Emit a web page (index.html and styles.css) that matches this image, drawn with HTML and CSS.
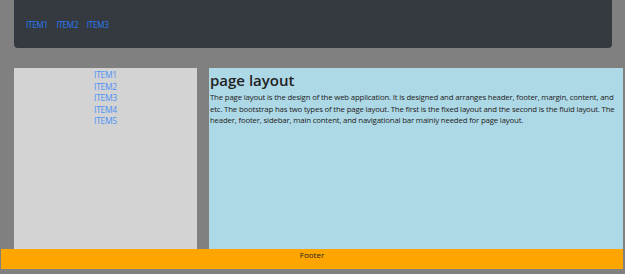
FILE: index.html
```html
<!DOCTYPE html>
<html>

<head>
    <link rel="stylesheet" href="styles.css">
</head>

<body>
    <div class="page">
        <nav class="navbar">
            <a href="#" class="nav-link">ITEM1</a>
            <a href="#" class="nav-link">ITEM2</a>
            <a href="#" class="nav-link">ITEM3</a>
        </nav>

        <div class="main">
            <div class="sidebar">
                <a href="#">ITEM1</a>
                <a href="#">ITEM2</a>
                <a href="#">ITEM3</a>
                <a href="#">ITEM4</a>
                <a href="#">ITEM5</a>
            </div>

            <div class="content">
                <h2>page layout</h2>
                <p>The page layout is the design of the web application. It is designed and arranges header, footer, margin, content, and etc. The bootstrap has two types of the page layout. The first is the fixed layout and the second is the fluid layout. The header, footer, sidebar, main content, and navigational bar mainly needed for page layout.</p>
            </div>
        </div>

        <div class="footer">Footer</div>
    </div>
</body>

</html>
```

FILE: styles.css
```css
body {
    margin: 0;
    font-family: "Open Sans", "Noto Sans", sans-serif;
}

.page {
    width: 625px;
    height: 274px;
    background-color: #808080;
}

.navbar {
    margin-left: 14px;
    width: 598px;
    height: 48px;
    background-color: #343a40;
    border-radius: 0 0 4px 4px;
    display: flex;
    align-items: center;
    gap: 8.5px;
    padding-left: 12px;
    box-sizing: border-box;
}

.nav-link {
    color: #2b7bf3;
    text-decoration: none;
    font-size: 8.2px;
    letter-spacing: -0.3px;
}

.main {
    display: flex;
    gap: 12px;
    margin-top: 20px;
    margin-left: 14px;
    height: 181px;
}

.sidebar {
    width: 183px;
    background-color: #d3d3d3;
    display: flex;
    flex-direction: column;
    align-items: center;
    padding-top: 1px;
}

.sidebar a {
    color: #4b92f5;
    text-decoration: none;
    font-size: 8.5px;
    line-height: 11.5px;
    letter-spacing: -0.3px;
}

.content {
    width: 414px;
    background-color: #add8e6;
    padding-left: 1px;
    padding-right: 6px;
    box-sizing: border-box;
    color: #222;
}

.content h2 {
    margin: 0;
    font-size: 15px;
    font-weight: 600;
    line-height: 24px;
}

.content p {
    margin: 0;
    font-size: 7.8px;
    line-height: 11.5px;
    letter-spacing: -0.17px;
}

.footer {
    margin-left: 1px;
    width: 622px;
    height: 20px;
    background-color: #ffa500;
    text-align: center;
    font-size: 8px;
    line-height: 12px;
    color: #222;
}
```
